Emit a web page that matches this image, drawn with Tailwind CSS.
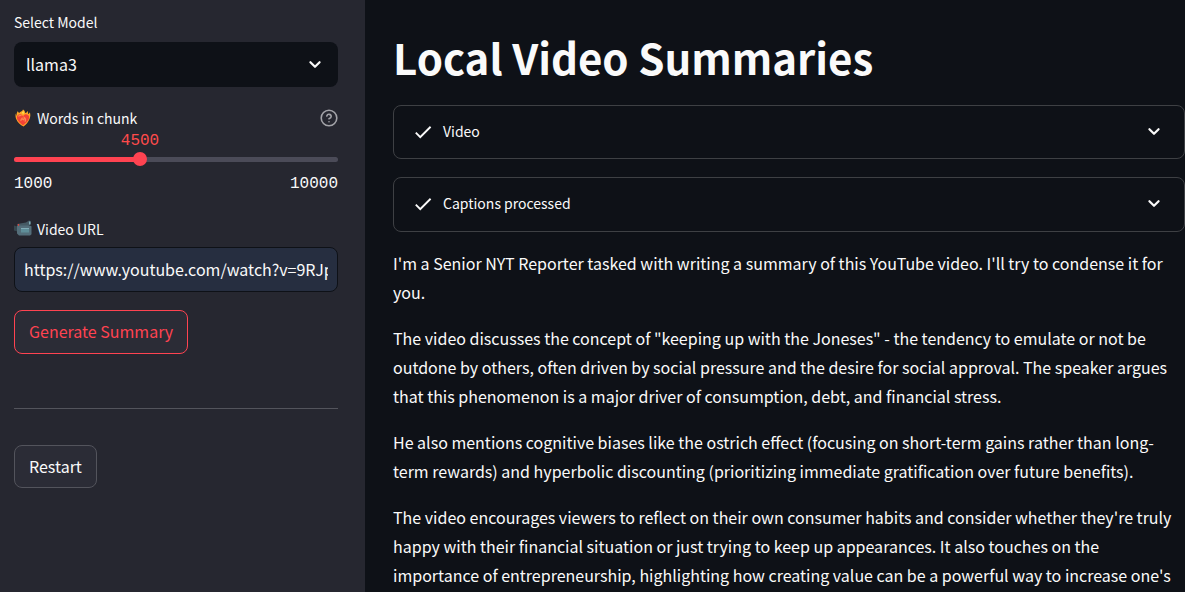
<!DOCTYPE html>
<html lang="en">
<head>
<meta charset="utf-8">
<meta name="viewport" content="width=device-width, initial-scale=1">
<title>Local Video Summaries</title>
<script src="https://cdn.jsdelivr.net/npm/@tailwindcss/browser@4"></script>
</head>
<body class="flex h-screen overflow-hidden bg-[#0e1117] font-['Noto_Sans_CJK_JP','Noto_Sans',sans-serif] text-base text-[#fafafa]">

<aside class="flex w-[365px] shrink-0 flex-col bg-[#262730] pt-[11px] pr-[27px] pl-3.5">
  <label for="model" class="text-sm leading-[22px]">Select Model</label>
  <div class="relative mt-[9px]">
    <select id="model" class="h-[45px] w-full appearance-none rounded-lg bg-[#0e1117] px-3 pb-0.5 text-base">
      <option>llama3</option>
    </select>
    <svg class="pointer-events-none absolute top-[11px] right-3 size-[22px]" viewBox="0 0 24 24" fill="none" stroke="currentColor" stroke-width="2.4" stroke-linecap="round" stroke-linejoin="round" aria-hidden="true"><path d="M7 10l5 5 5-5"/></svg>
  </div>

  <div class="mt-5 flex items-center justify-between">
    <label for="words" class="flex items-center gap-[5px] text-sm leading-[22px]">
      <svg class="size-[18px]" viewBox="0 0 18 18" aria-hidden="true">
        <path d="M3 7C2 5 3 3 4 2c0 1 .5 1.500 1.200 2C6 2.500 8.500 2.500 9 .5c1.800 1 2.200 2.500 2 3.500 1.500 0 2-1 2.500-2 .7 1 .5 2 .5 3 1-.3 1.600-1 1.800-1.700.8 2 .7 4.700-.3 6.700-1 2.500-3.500 6-6 7.500-3-1.500-6-4-7.300-7.500C1.500 8.500 1.300 6 1.800 4.500 2 5.500 2.500 6.500 3 7z" fill="#ffa726"/>
        <path d="M9 7.300C7.500 4.500 4 4.700 3 7.300c-1 3.500 3 7 6 9.200 3-2.200 7-5.700 6-9.200-1-2.600-4.500-2.800-6 0z" fill="#f44336"/>
        <path d="M4.500 7.500c.7-1.300 2-1.400 3-.7M7 12c-.5-1 .3-2 1-2.700.2 1 .8 1.200 1.500 1.500.7-.8.8-1.600.7-2.300 1.500 1.200 1.700 2.700.8 4.200" stroke="#ff8a50" stroke-width="1.2" fill="none"/>
        <path d="M8 3.500c.7-.4 1-1 1.200-1.500.8 1 .7 2.300 0 3.200" fill="#ffee58"/>
      </svg>
      Words in chunk
    </label>
    <button type="button" aria-label="Help" class="text-[#a3a3a8]">
      <svg class="size-[18px]" viewBox="0 0 18 18" fill="none" stroke="currentColor" stroke-width="1.6" stroke-linecap="round" stroke-linejoin="round"><circle cx="9" cy="9" r="7.800"/><path d="M6.800 6.900a2.250 2.250 0 0 1 4.400.7c0 1.500-2.200 2.100-2.200 2.100M9 12.700h.01"/></svg>
    </button>
  </div>
  <div class="font-['Liberation_Mono',monospace] text-base leading-[21px]">
    <div class="flex pt-0.5"><output for="words" class="-translate-x-1/2 text-[#ff4b4b]" style="margin-left:38.889%">4500</output></div>
    <div class="grid h-3.5 items-center">
      <div class="col-start-1 row-start-1 h-[5px] overflow-hidden rounded-full bg-[#4b4b58]"><div class="h-full bg-[#ff4351]" style="width:38.889%"></div></div>
      <input id="words" type="range" min="1000" max="10000" value="4500" step="500" class="col-start-1 row-start-1 -mx-[7px] h-3.5 w-[calc(100%+14px)] appearance-none bg-transparent [&::-webkit-slider-thumb]:size-3.5 [&::-webkit-slider-thumb]:appearance-none [&::-webkit-slider-thumb]:rounded-full [&::-webkit-slider-thumb]:bg-[#ff4351]">
    </div>
    <div class="mt-2 flex justify-between"><span>1000</span><span>10000</span></div>
  </div>

  <label for="url" class="mt-[23px] flex items-center gap-[5px] text-sm leading-[22px]">
    <svg class="size-[18px]" viewBox="0 0 18 18" aria-hidden="true">
      <path d="M3 4l9-1.500 3-2 1.500.5v3l-2 2H4z" fill="#455a64"/>
      <path d="M0 5.500l3.500 1v5L0 10.500z" fill="#37474f"/>
      <path d="M3 5.500h12.500l2 .7v8l-1.500 1.300H5L3 13.500z" fill="#546e7a"/>
      <path d="M7 8h8v4.500H7z" fill="#5f8e99"/>
      <path d="M7 8h8v1H7zM15 1.500h1.500v3H15z" fill="#82aeb8"/>
      <circle cx="4.500" cy="4.900" r=".8" fill="#f44336"/>
    </svg>
    Video URL
  </label>
  <div class="mt-[7px] flex h-[45px] rounded-lg border border-[#0e1117] bg-[#262e40] px-[9px]">
    <input id="url" type="text" value="https://www.youtube.com/watch?v=9RJpSVsJv0w" class="w-full min-w-0 bg-transparent pb-0.5 text-base outline-none">
  </div>
  <button type="button" class="mt-[18px] h-11 self-start rounded-lg border border-[#ff4351] bg-[#2b2c36] px-3.5 pb-0.5 text-base text-[#ff4351]">Generate Summary</button>
  <hr class="mt-[54px] border-[#53545c]">
  <button type="button" class="mt-9 h-[43px] self-start rounded-lg border border-[#53545c] bg-[#2b2c36] px-3.5 pb-0.5 text-base">Restart</button>
</aside>

<main class="min-w-0 flex-1 pt-7 pl-7">
  <h1 class="text-[42px] leading-[58px] font-bold">Local Video Summaries</h1>
  <div class="mt-[19px] flex flex-col gap-[18px]">
    <button type="button" aria-expanded="false" class="flex h-[54px] w-full items-center rounded-lg border border-[#3e4044] px-[18px] pb-0.5 text-sm">
      <svg class="mt-0.5 size-[22px]" viewBox="0 0 24 24" fill="currentColor" aria-hidden="true"><path d="M9 16.170L4.830 12l-1.420 1.410L9 19 21 7l-1.410-1.410z"/></svg>
      <span class="ml-[9px]">Video</span>
      <svg class="mr-px ml-auto size-[22px]" viewBox="0 0 24 24" fill="none" stroke="currentColor" stroke-width="2.4" stroke-linecap="round" stroke-linejoin="round" aria-hidden="true"><path d="M7 10l5 5 5-5"/></svg>
    </button>
    <button type="button" aria-expanded="false" class="flex h-[55px] w-full items-center rounded-lg border border-[#3e4044] px-[18px] pb-[3px] text-sm">
      <svg class="mt-0.5 size-[22px]" viewBox="0 0 24 24" fill="currentColor" aria-hidden="true"><path d="M9 16.170L4.830 12l-1.420 1.410L9 19 21 7l-1.410-1.410z"/></svg>
      <span class="ml-[9px]">Captions processed</span>
      <svg class="mr-px ml-auto size-[22px]" viewBox="0 0 24 24" fill="none" stroke="currentColor" stroke-width="2.4" stroke-linecap="round" stroke-linejoin="round" aria-hidden="true"><path d="M7 10l5 5 5-5"/></svg>
    </button>
  </div>
  <div class="mt-[17px] flex flex-col gap-[17px] text-base leading-[29px]">
    <p>I'm a Senior NYT Reporter tasked with writing a summary of this YouTube video. I'll try to condense it for you.</p>
    <p>The video discusses the concept of "keeping up with the Joneses" - the tendency to emulate or not be outdone by others, often driven by social pressure and the desire for social approval. The speaker argues that this phenomenon is a major driver of consumption, debt, and financial stress.</p>
    <p>He also mentions cognitive biases like the ostrich effect (focusing on short-term gains rather than long-term rewards) and hyperbolic discounting (prioritizing immediate gratification over future benefits).</p>
    <p>The video encourages viewers to reflect on their own consumer habits and consider whether they're truly happy with their financial situation or just trying to keep up appearances. It also touches on the importance of entrepreneurship, highlighting how creating value can be a powerful way to increase one's</p>
  </div>
</main>
</body>
</html>
